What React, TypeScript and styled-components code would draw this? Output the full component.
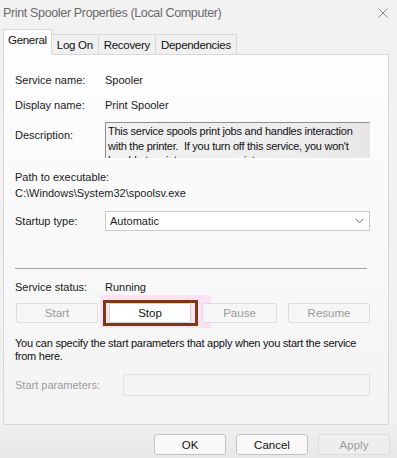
import React from "react";
import styled, { createGlobalStyle } from "styled-components";

const Global = createGlobalStyle`
  html, body { margin: 0; padding: 0; }
  body { background: #f0f0f0; font-family: "Liberation Sans", Arial, sans-serif; }
`;

const Window = styled.div`
  width: 397px;
  height: 458px;
  background: #f1f1f1;
  display: flex;
  flex-direction: column;
  overflow: hidden;
  font-size: 11px;
  color: #1a1a1a;
`;

const TitleBar = styled.div`
  height: 28px;
  display: flex;
  align-items: center;
  justify-content: space-between;
  padding: 0 9px 2px 3px;
  box-sizing: border-box;
  background: #f2f2f2;
`;

const Title = styled.span`
  font-family: "Liberation Sans", Arial, sans-serif;
  font-size: 12.5px;
  color: #6a6a6a;
  letter-spacing: -0.35px;
`;

const CloseIcon = styled.svg`
  width: 10px;
  height: 10px;
`;

const TabStrip = styled.div`
  display: flex;
  align-items: flex-end;
  height: 26px;
  padding-left: 3px;
  position: relative;
  z-index: 1;
`;

const Tab = styled.div<{ $active?: boolean }>`
  height: ${(p) => (p.$active ? "26px" : "20px")};
  padding: 0 ${(p) => (p.$active ? "4px" : "5px")};
  margin-bottom: ${(p) => (p.$active ? "-1px" : "0")};
  display: flex;
  align-items: center;
  box-sizing: border-box;
  border: 1px solid #d9d9d9;
  border-bottom: ${(p) => (p.$active ? "1px solid #fdfdfd" : "none")};
  border-left: ${(p) => (p.$active ? "1px solid #d9d9d9" : "none")};
  background: ${(p) => (p.$active ? "#fdfdfd" : "#f0f0f0")};
  font-size: 11.5px;
  letter-spacing: -0.3px;
  color: #111;
  padding-bottom: ${(p) => (p.$active ? "4px" : "0")};
`;

const Panel = styled.div`
  margin: 0 8px 0 3px;
  height: 371px;
  box-sizing: border-box;
  border: 1px solid #d9d9d9;
  background: linear-gradient(180deg, #fdfdfd 0%, #f8f8f8 60%, #f3f3f3 100%);
  padding: 17px 18px 0 11px;
  display: flex;
  flex-direction: column;
`;

const Row = styled.div<{ $top?: number; $align?: string }>`
  display: grid;
  grid-template-columns: 90px 1fr;
  align-items: ${(p) => p.$align || "center"};
  margin-top: ${(p) => p.$top ?? 0}px;
`;

const Label = styled.div<{ $disabled?: boolean }>`
  line-height: 16px;
  color: ${(p) => (p.$disabled ? "#9b9b9b" : "#1a1a1a")};
  white-space: nowrap;
`;

const Value = styled.div`
  line-height: 16px;
`;

const DescBox = styled.div`
  height: 36px;
  overflow: hidden;
  box-sizing: border-box;
  border-top: 1px solid #8c8c8c;
  border-left: 1px solid #8c8c8c;
  border-right: 1px solid #e4e4e4;
  background: linear-gradient(90deg, #f1f1f1 0%, #ececec 80%, #e6e6e6 100%);
  padding: 1px 2px 0 2px;
  line-height: 14.5px;
  letter-spacing: -0.25px;
  white-space: nowrap;
  color: #111;
`;

const Block = styled.div<{ $top?: number }>`
  margin-top: ${(p) => p.$top ?? 0}px;
  line-height: 16px;
`;

const Select = styled.div`
  height: 20px;
  box-sizing: border-box;
  border: 1px solid #c9c9c9;
  background: #ffffff;
  display: flex;
  align-items: center;
  justify-content: space-between;
  padding: 0 5px 0 4px;
`;

const Chevron = styled.svg`
  width: 9px;
  height: 6px;
`;

const Separator = styled.div`
  margin-top: 37px;
  height: 1px;
  background: #a3a3a3;
  margin-right: 3px;
`;

const ButtonRow = styled.div`
  display: grid;
  grid-template-columns: 82px 82px 75px 82px;
  justify-content: space-between;
  margin-top: 8px;
  padding-left: 1px;
`;

const Highlight = styled.div`
  position: relative;
  display: flex;
`;

const PinkGlow = styled.div`
  position: absolute;
  left: -9px;
  top: -8px;
  width: 111px;
  height: 33px;
  background: #fde2f3;
  z-index: 0;
`;

const RedFrame = styled.div`
  position: absolute;
  left: -6px;
  top: -3px;
  width: 95px;
  height: 26px;
  box-sizing: border-box;
  border: 3px solid #7b3a14;
  z-index: 2;
`;

const SvcButton = styled.div<{ $enabled?: boolean; $w?: number }>`
  position: relative;
  z-index: 1;
  width: ${(p) => p.$w ?? 82}px;
  height: 20px;
  box-sizing: border-box;
  border: 1px solid ${(p) => (p.$enabled ? "#cfcfcf" : "#dedede")};
  border-radius: 2px;
  background: ${(p) => (p.$enabled ? "#ffffff" : "#f6f6f6")};
  color: ${(p) => (p.$enabled ? "#111" : "#9a9a9a")};
  display: flex;
  align-items: center;
  justify-content: center;
  font-size: 11.5px;
`;

const Para = styled.div`
  margin-top: 14px;
  line-height: 13px;
  color: #111;
  white-space: nowrap;
  letter-spacing: -0.25px;
`;

const ParamRow = styled.div`
  display: grid;
  grid-template-columns: 108px 1fr;
  align-items: center;
  margin-top: 11px;
`;

const ParamInput = styled.div`
  height: 22px;
  box-sizing: border-box;
  border: 1px solid #e2e2e2;
  background: #f4f4f4;
`;

const Footer = styled.div`
  flex: 1;
  display: flex;
  justify-content: flex-end;
  align-items: flex-start;
  gap: 10px;
  padding: 9px 7px 0 0;
  background: linear-gradient(180deg, #efefef 0%, #e8e8e8 100%);
`;

const DialogButton = styled.div<{ $disabled?: boolean }>`
  width: 72px;
  height: 21px;
  box-sizing: border-box;
  border: 1px solid ${(p) => (p.$disabled ? "#dddddd" : "#c2c2c2")};
  border-radius: 3px;
  background: ${(p) => (p.$disabled ? "#eeeeee" : "#f8f8f8")};
  color: ${(p) => (p.$disabled ? "#9c9c9c" : "#111")};
  display: flex;
  align-items: center;
  justify-content: center;
  font-size: 11.5px;
`;

export default function App() {
  return (
    <>
      <Global />
      <Window>
        <TitleBar>
          <Title>Print Spooler Properties (Local Computer)</Title>
          <CloseIcon viewBox="0 0 10 10">
            <path d="M0.5 0.5 L9.5 9.5 M9.5 0.5 L0.5 9.5" stroke="#8a8a8a" strokeWidth="1" fill="none" />
          </CloseIcon>
        </TitleBar>
        <TabStrip>
          <Tab $active>General</Tab>
          <Tab>Log On</Tab>
          <Tab>Recovery</Tab>
          <Tab>Dependencies</Tab>
        </TabStrip>
        <Panel>
          <Row>
            <Label>Service name:</Label>
            <Value>Spooler</Value>
          </Row>
          <Row $top={9}>
            <Label>Display name:</Label>
            <Value>Print Spooler</Value>
          </Row>
          <Row $top={9} $align="start">
            <Label style={{ marginTop: 5 }}>Description:</Label>
            <DescBox>
              This service spools print jobs and handles interaction
              <br />
              with the printer.&nbsp; If you turn off this service, you won't
              <br />
              be able to print or see your printers.
            </DescBox>
          </Row>
          <Block $top={11}>Path to executable:</Block>
          <Block>C:\Windows\System32\spoolsv.exe</Block>
          <Row $top={10}>
            <Label>Startup type:</Label>
            <Select>
              <span>Automatic</span>
              <Chevron viewBox="0 0 9 6">
                <path d="M0.5 0.8 L4.5 4.8 L8.5 0.8" stroke="#6a6a6a" strokeWidth="1" fill="none" />
              </Chevron>
            </Select>
          </Row>
          <Separator />
          <Row $top={10}>
            <Label>Service status:</Label>
            <Value>Running</Value>
          </Row>
          <ButtonRow>
            <SvcButton>Start</SvcButton>
            <Highlight>
              <PinkGlow />
              <SvcButton $enabled>Stop</SvcButton>
              <RedFrame />
            </Highlight>
            <SvcButton $w={75}>Pause</SvcButton>
            <SvcButton>Resume</SvcButton>
          </ButtonRow>
          <Para>
            You can specify the start parameters that apply when you start the service
            <br />
            from here.
          </Para>
          <ParamRow>
            <Label $disabled>Start parameters:</Label>
            <ParamInput />
          </ParamRow>
        </Panel>
        <Footer>
          <DialogButton>OK</DialogButton>
          <DialogButton>Cancel</DialogButton>
          <DialogButton $disabled>Apply</DialogButton>
        </Footer>
      </Window>
    </>
  );
}
